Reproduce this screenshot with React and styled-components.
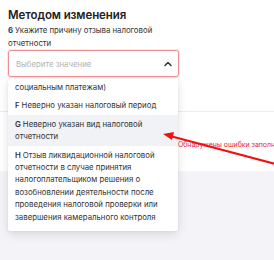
import React from "react";
import styled, { createGlobalStyle } from "styled-components";

const GlobalStyle = createGlobalStyle`
  html, body {
    margin: 0;
    padding: 0;
    background: #ffffff;
  }
  body {
    font-family: Inter, "Noto Sans", sans-serif;
    color: #2b2b2b;
  }
`;

const Page = styled.div`
  position: relative;
  width: 274px;
  height: 260px;
  overflow: hidden;
  display: flex;
  flex-direction: column;
  background: #ffffff;
`;

const Form = styled.div`
  padding: 8px 0 0 8px;
  display: flex;
  flex-direction: column;
`;

const Title = styled.div`
  font-size: 11.5px;
  line-height: 14px;
  font-weight: 600;
  color: #222;
  letter-spacing: -0.1px;
`;

const Question = styled.div`
  margin-top: 1.5px;
  width: 172px;
  font-size: 7.8px;
  line-height: 13px;
  color: #333;
`;

const Num = styled.b`
  color: #1d3f74;
  font-weight: 700;
  margin-right: 2px;
`;

const SelectWrap = styled.div`
  position: relative;
  width: 171px;
  margin-top: 0.5px;
`;

const SelectBox = styled.div`
  box-sizing: border-box;
  height: 27px;
  display: flex;
  align-items: center;
  justify-content: space-between;
  padding: 0 6px 0 7px;
  border: 1px solid #ef8f8f;
  border-radius: 3px;
  box-shadow: 0 0 0 1px rgba(240, 150, 150, 0.25);
  background: #fff;
`;

const Placeholder = styled.span`
  font-size: 7.8px;
  color: #b3b3b3;
`;

const Menu = styled.ul`
  position: absolute;
  top: 29px;
  left: 0;
  width: 170px;
  height: 150px;
  margin: 0;
  padding: 0 0 2px;
  list-style: none;
  background: #fff;
  box-shadow: 0 3px 10px rgba(0, 0, 0, 0.12), 0 0 2px rgba(0, 0, 0, 0.08);
  border-radius: 2px;
  overflow: hidden;
  z-index: 2;
`;

const Item = styled.li`
  padding: ${(p) => (p.$cut ? "2px" : "3px")} 7px 3px;
  font-size: 7.8px;
  line-height: 12.4px;
  color: #333;
  background: ${(p) => (p.$active ? "#f0f2f6" : "transparent")};
`;

const Letter = styled.b`
  font-weight: 600;
  margin-right: 2px;
`;

const Divider = styled.div`
  margin-top: 34px;
  border-top: 1px solid #ececef;
`;

const ErrorRow = styled.div`
  height: 59px;
  box-sizing: border-box;
  padding: 19px 0 0 178px;
  white-space: nowrap;
`;

const ErrorText = styled.span`
  font-size: 6.9px;
  line-height: 8px;
  color: #e8242b;
`;

const Gray = styled.div`
  flex: 1;
  background: #f4f4f8;
`;

const Arrow = styled.svg`
  position: absolute;
  left: 0;
  top: 0;
  width: 274px;
  height: 260px;
  pointer-events: none;
  z-index: 3;
`;

const ChevronUp = () => (
  <svg width="8" height="6" viewBox="0 0 8 6">
    <path d="M1 4.5 L4 1.5 L7 4.5" fill="none" stroke="#333" strokeWidth="1.5" strokeLinecap="round" strokeLinejoin="round" />
  </svg>
);

const items = [
  { cut: true, text: "социальным платежам)" },
  { letter: "F", text: "Неверно указан налоговый период" },
  { letter: "G", text: "Неверно указан вид налоговой отчетности", active: true },
  {
    letter: "H",
    text:
      "Отзыв ликвидационной налоговой отчетности в случае принятия налогоплательщиком решения о возобновлении деятельности после проведения налоговой проверки или завершения камерального контроля",
  },
];

export default function App() {
  return (
    <>
      <GlobalStyle />
      <Page>
        <Form>
          <Title>Методом изменения</Title>
          <Question>
            <Num>6</Num>Укажите причину отзыва налоговой отчетности
          </Question>
          <SelectWrap>
            <SelectBox>
              <Placeholder>Выберите значение</Placeholder>
              <ChevronUp />
            </SelectBox>
            <Menu>
              {items.map((it, i) => (
                <Item key={i} $cut={it.cut} $active={it.active}>
                  {it.letter && <Letter>{it.letter}</Letter>}
                  {it.text}
                </Item>
              ))}
            </Menu>
          </SelectWrap>
        </Form>
        <Divider />
        <ErrorRow>
          <ErrorText>Обнаружены ошибки заполнения</ErrorText>
        </ErrorRow>
        <Gray />
        <Arrow viewBox="0 0 274 260">
          <line x1="290" y1="168" x2="172" y2="136.5" stroke="#f01010" strokeWidth="2.2" />
          <polygon points="163,134 174,132 172,140" fill="#f01010" />
        </Arrow>
      </Page>
    </>
  );
}
